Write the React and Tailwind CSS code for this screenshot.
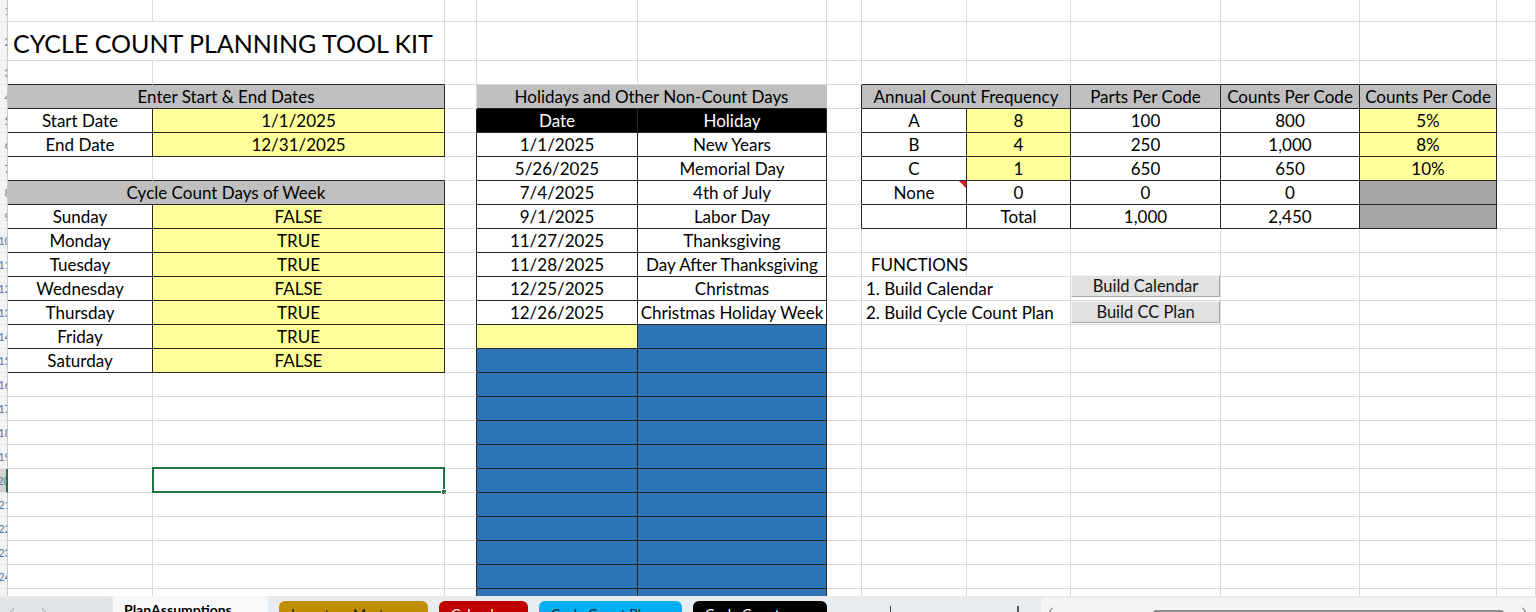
import React from "react";
import { ChevronLeft, ChevronRight } from "lucide-react";

// sheet tracks: row header, A..L
const NROWS = 25;
const NCOLS = 13;

const FILL = {
  yellow: "bg-[#ffff99]",
  gray: "bg-[#bfbfbf]",
  dark: "bg-[#a6a6a6]",
  black: "bg-black text-white",
  blue: "bg-[#2e75b6]",
};
const RIGHT = {
  line: "border-r-[#dadada]",
  edge: "border-r-[#262626]",
  gray: "border-r-[#bfbfbf]",
};
const BOTTOM = {
  line: "border-b-[#dadada]",
  edge: "border-b-[#262626]",
  gray: "border-b-[#bfbfbf]",
};

const cells = [];
const put = (r, c, t, o = {}) => cells.push({ r, c, t, span: 1, ...o });

put(1, 1, "CYCLE COUNT PLANNING TOOL KIT", { span: 2, title: true });

// start / end dates
put(3, 1, "Enter Start & End Dates", { span: 2, bg: "gray", b: true });
put(4, 1, "Start Date", { b: true });
put(4, 2, "1/1/2025", { bg: "yellow", b: true });
put(5, 1, "End Date", { b: true });
put(5, 2, "12/31/2025", { bg: "yellow", b: true });

// days of week
put(7, 1, "Cycle Count Days of Week", { span: 2, bg: "gray", b: true });
[
  ["Sunday", "FALSE"],
  ["Monday", "TRUE"],
  ["Tuesday", "TRUE"],
  ["Wednesday", "FALSE"],
  ["Thursday", "TRUE"],
  ["Friday", "TRUE"],
  ["Saturday", "FALSE"],
].forEach(([d, v], i) => {
  put(8 + i, 1, d, { b: true });
  put(8 + i, 2, v, { bg: "yellow", b: true });
});

// holidays
put(3, 4, "Holidays and Other Non-Count Days", { span: 2, bg: "gray" });
put(4, 4, "Date", { bg: "black", b: true });
put(4, 5, "Holiday", { bg: "black", b: true });
[
  ["1/1/2025", "New Years"],
  ["5/26/2025", "Memorial Day"],
  ["7/4/2025", "4th of July"],
  ["9/1/2025", "Labor Day"],
  ["11/27/2025", "Thanksgiving"],
  ["11/28/2025", "Day After Thanksgiving"],
  ["12/25/2025", "Christmas"],
  ["12/26/2025", "Christmas Holiday Week"],
].forEach(([d, h], i) => {
  put(5 + i, 4, d, { b: true });
  put(5 + i, 5, h, { b: true });
});
put(13, 4, "", { bg: "yellow", b: true });
put(13, 5, "", { bg: "blue", b: true });
for (let r = 14; r < NROWS; r++) {
  put(r, 4, "", { bg: "blue", b: true });
  put(r, 5, "", { bg: "blue", b: true });
}

// count frequency
put(3, 7, "Annual Count Frequency", { span: 2, bg: "gray", b: true });
put(3, 9, "Parts Per Code", { bg: "gray", b: true });
put(3, 10, "Counts Per Code", { bg: "gray", b: true });
put(3, 11, "Counts Per Code", { bg: "gray", b: true });
[
  ["A", "8", "100", "800", "5%"],
  ["B", "4", "250", "1,000", "8%"],
  ["C", "1", "650", "650", "10%"],
].forEach((row, i) => {
  put(4 + i, 7, row[0], { b: true });
  put(4 + i, 8, row[1], { bg: "yellow", b: true });
  put(4 + i, 9, row[2], { b: true });
  put(4 + i, 10, row[3], { b: true });
  put(4 + i, 11, row[4], { bg: "yellow", b: true });
});
put(7, 7, "None", { b: true, note: true });
put(7, 8, "0", { b: true });
put(7, 9, "0", { b: true });
put(7, 10, "0", { b: true });
put(7, 11, "", { bg: "dark", b: true });
put(8, 7, "", { b: true });
put(8, 8, "Total", { b: true });
put(8, 9, "1,000", { b: true });
put(8, 10, "2,450", { b: true });
put(8, 11, "", { bg: "dark", b: true });

// functions
put(10, 7, "FUNCTIONS", { left: true, indent: true });
put(11, 7, "1. Build Calendar", { span: 2, left: true });
put(11, 9, "", { button: "Build Calendar", first: true });
put(12, 7, "2. Build Cycle Count Plan", { span: 2, left: true });
put(12, 9, "", { button: "Build CC Plan" });

put(19, 2, "", { selected: true });

const cover = Array.from({ length: NROWS + 1 }, () => Array(NCOLS + 1).fill(null));
cells.forEach((cell) => {
  for (let k = 0; k < cell.span; k++) cover[cell.r][cell.c + k] = cell;
});

function Cell({ cell, r, c }) {
  const span = cell ? cell.span : 1;
  const right = cover[r][c + span];
  const below = cover[r + 1] ? cover[r + 1][c] : null;
  let rb = "line";
  let bb = "line";
  if ((cell && cell.b) || (right && right.b)) rb = "edge";
  else if (cell && cell.bg === "gray") rb = "gray";
  if ((cell && cell.b) || (below && below.b)) bb = "edge";
  else if (cell && cell.bg === "gray") bb = "gray";

  const base =
    "relative flex whitespace-nowrap border-r border-b text-[17px] leading-[20px] text-black";
  const fill = cell && cell.bg ? FILL[cell.bg] : "";
  const spanCls = span === 2 ? "col-span-2" : "";

  if (cell && cell.title) {
    return (
      <div className={`${base} ${spanCls} ${RIGHT[rb]} ${BOTTOM[bb]} items-end pl-[5px] pb-[2px]`}>
        <span className="text-[25px] leading-[30px]">{cell.t}</span>
      </div>
    );
  }

  if (cell && cell.button) {
    return (
      <div className={`${base} ${RIGHT[rb]} ${BOTTOM[bb]} items-start`}>
        <div
          className={`w-full h-[22px] flex items-center justify-center bg-[#e1e1e1] border border-[#a9a9a9] border-t-[#f4f4f4] border-l-[#f4f4f4] text-[16.5px] text-[#111] ${
            cell.first ? "-mt-[2px]" : ""
          }`}
        >
          {cell.button}
        </div>
      </div>
    );
  }

  const align = cell && cell.left ? (cell.indent ? "justify-start pl-[9px]" : "justify-start pl-[4px]") : "justify-center";

  return (
    <div className={`${base} ${spanCls} ${fill} ${RIGHT[rb]} ${BOTTOM[bb]} items-end pb-[1px] ${align}`}>
      {cell && cell.t}
      {cell && cell.note && (
        <span className="absolute top-0 right-0 w-0 h-0 border-l-[7px] border-l-transparent border-t-[7px] border-t-[#e02020]" />
      )}
      {cell && cell.selected && (
        <span className="absolute -left-[1px] -top-[2px] -right-[1px] -bottom-[1px] border-2 border-[#217346]">
          <span className="absolute -right-[4px] -bottom-[4px] w-[6px] h-[6px] bg-[#217346] border border-white" />
        </span>
      )}
    </div>
  );
}

function RowHead({ r }) {
  const sel = r === 19;
  return (
    <div
      className={`flex justify-end overflow-hidden border-b border-b-[#e4e4e4] border-r ${
        sel ? "bg-[#d2d2d2] border-r-2 border-r-[#217346]" : "bg-[#f3f3f3] border-r-[#c8c8c8]"
      } items-center`}
    >
      <span className="text-[11px] leading-none text-[#5b7398] translate-x-[4px]">{r + 1}</span>
    </div>
  );
}

function Sheet() {
  const out = [];
  for (let r = 0; r < NROWS; r++) {
    out.push(<RowHead key={`h${r}`} r={r} />);
    for (let c = 1; c < NCOLS; c++) {
      const cell = cover[r][c];
      if (cell && cell.c !== c) continue;
      out.push(<Cell key={`${r}-${c}`} cell={cell} r={r} c={c} />);
    }
  }
  return (
    <div className="h-[596px] overflow-hidden bg-white">
      <div className="grid grid-cols-[8px_145px_292px_32px_161px_189px_35px_105px_104px_150px_139px_137px_1fr] grid-rows-[22px_39px_repeat(23,24px)]">
        {out}
      </div>
    </div>
  );
}

function Tabs() {
  return (
    <div className="flex h-[16px] overflow-hidden bg-[#e9ecef] text-[14px] leading-[16px]">
      <div className="w-[113px] shrink-0 mt-[1px] rounded-tr-[6px] bg-[#e2e5e8] flex items-start gap-[18px] pl-[5px] pt-[8px] text-[#8a8a8a]">
        <ChevronLeft size={14} strokeWidth={1.5} />
        <ChevronRight size={14} strokeWidth={1.5} />
      </div>
      <div className="w-[155px] shrink-0 bg-[#f7f8f9] rounded-t-[4px] pl-[11px] pt-[6px] font-bold text-black">
        PlanAssumptions
      </div>
      <div className="ml-[11px] w-[149px] shrink-0 mt-[5px] rounded-t-[6px] bg-[#bf8f00] pl-[12px] pt-[5px] text-[#1a1a1a]">
        Inventory Master
      </div>
      <div className="ml-[11px] w-[89px] shrink-0 mt-[5px] rounded-t-[6px] bg-[#c00000] pl-[12px] pt-[5px] text-white">
        Calendar
      </div>
      <div className="ml-[11px] w-[143px] shrink-0 mt-[5px] rounded-t-[6px] bg-[#00b0f0] pl-[12px] pt-[5px] text-[#1a1a1a]">
        Cycle Count Plan
      </div>
      <div className="ml-[11px] w-[134px] shrink-0 mt-[5px] rounded-t-[6px] bg-black pl-[12px] pt-[5px] text-white">
        Cycle Count
      </div>
      <div className="w-[64px] shrink-0 flex justify-end pt-[10px]">
        <span className="w-px h-[6px] bg-[#444]" />
      </div>
      <div className="w-[128px] shrink-0 flex justify-end pt-[10px]">
        <span className="w-[2px] h-[6px] bg-[#555]" />
      </div>
      <div className="flex-1 ml-[22px] mt-[2px] rounded-tl-[6px] bg-[#f4f5f6] flex items-start">
        <ChevronLeft size={12} strokeWidth={2} className="mt-[7px] ml-[4px] text-[#555]" />
        <div className="ml-[96px] mt-[12px] w-[351px] h-[6px] rounded-[3px] bg-[#8c8c8c]" />
        <ChevronRight size={12} strokeWidth={2} className="mt-[7px] ml-[14px] text-[#555]" />
      </div>
    </div>
  );
}

export default function App() {
  return (
    <div className="w-[1536px] h-[612px] overflow-hidden font-['Lato','Open_Sans',sans-serif] bg-white">
      <Sheet />
      <Tabs />
    </div>
  );
}
